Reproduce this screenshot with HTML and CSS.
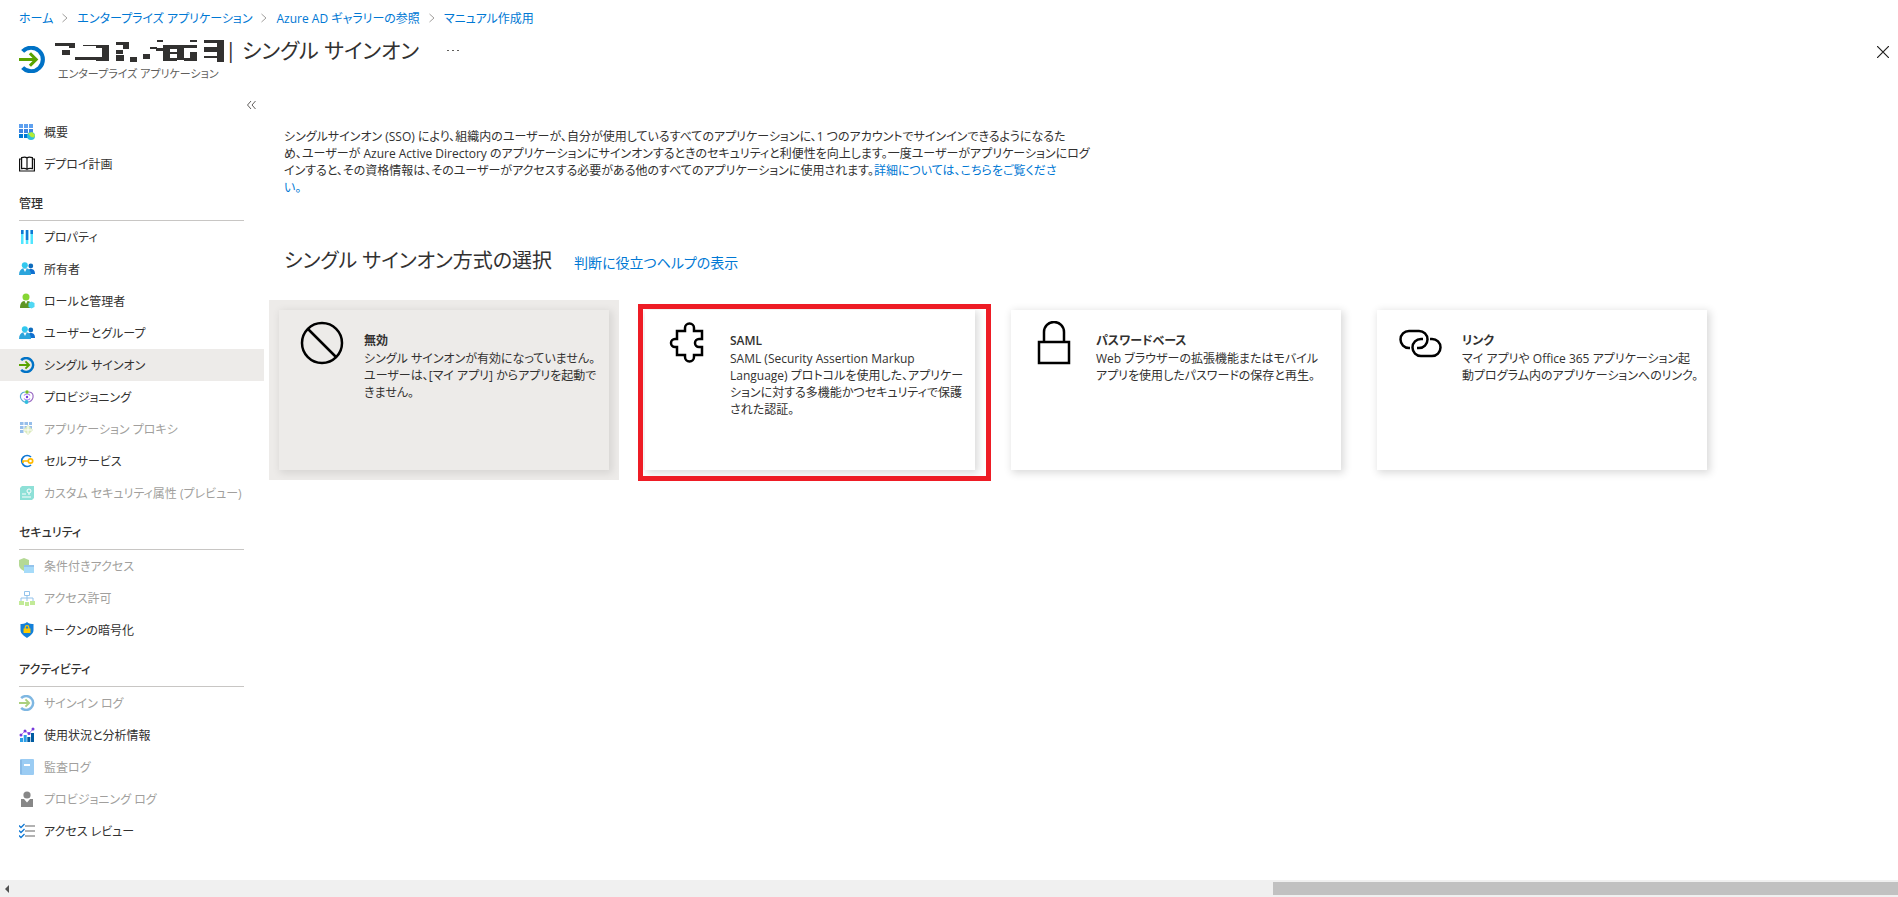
FILE: index.html
```html
<!DOCTYPE html>
<html lang="ja">
<head>
    <meta charset="UTF-8">
    <meta name="viewport" content="width=device-width, initial-scale=1.0">
    <title>シングル サインオン</title>
    <link rel="stylesheet" href="styles.css">
</head>
<body>
    <svg class="defs" aria-hidden="true">
        <symbol id="chevron" viewBox="0 0 8 10"><path d="M1.5 1l4.5 4-4.5 4" fill="none" stroke="#a19f9d"/></symbol>
        <symbol id="sso" viewBox="0 0 26 26">
            <path d="M3.500 5.200A11.300 11.300 0 1 1 3.500 20.800" fill="none" stroke="#0072c6" stroke-width="4"/>
            <path d="M0 13h16M10.500 7l6 6-6 6" fill="none" stroke="#59a300" stroke-width="3"/>
        </symbol>
        <symbol id="people" viewBox="0 0 16 16">
            <circle cx="11.800" cy="5" r="2.400" fill="#0f6cbd"/><path d="M8 13c0-4 2-5 4-5s4 1 4 5z" fill="#0f6fd0"/>
            <circle cx="5.800" cy="4.300" r="3" fill="#32c8ee"/><path d="M0 14c0-4 2-6 3.500-6.500h5C10 8 12 10 12 14z" fill="#2ba5dc"/><path d="M4.500 8h3L6 11z" fill="#fff"/>
        </symbol>
    </svg>

    <header class="page-header">
        <nav class="breadcrumb">
            <a href="#">ホーム</a>
            <svg class="chevron"><use href="#chevron"/></svg>
            <a href="#">エンタープライズ アプリケーション</a>
            <svg class="chevron"><use href="#chevron"/></svg>
            <a href="#">Azure AD ギャラリーの参照</a>
            <svg class="chevron"><use href="#chevron"/></svg>
            <a href="#">マニュアル作成用</a>
        </nav>
        <div class="title-bar">
            <svg class="title-icon"><use href="#sso"/></svg>
            <div class="title-text">
                <div class="title-row">
                    <svg class="masked-name" viewBox="0 0 170 22" fill="#323130">
                        <path d="M0 3h20v5h-6V6H0zM7 10h8v5H7zM20 17h27v3H20zM28 5h26v16H41v-4h6V8h-6V6H28z"/>
                        <path d="M61 2h13v7h-6V5h-7zM61 10h7v4h-7zM61 15h8v6h-8zM75 17h7v5h-7zM88 14h7v5h-7z"/>
                        <path d="M102 0h6v2h-6zM95 7h7v2h-7zM101 8h7V5h27v3h-6v12h-7v-6h-7v4h7v3h-14V11h-7zM115 9v3h7V9zM129 5h13v3h-13zM135 0h7v2h-7zM135 12h7v9h-13v-3h6z"/>
                        <path d="M149 0h20v22h-7v-4h-13v-2h13v-4h-13V7h13V3h-13z"/>
                    </svg>
                    <h1 class="page-title">| シングル サインオン</h1>
                    <button class="more-button" aria-label="その他">
                        <svg viewBox="0 0 12 2" width="12" height="2" fill="#605e5c"><path d="M0 0h2v1H0zM5 0h2v1H5zM10 0h2v1h-2z"/></svg>
                    </button>
                </div>
                <div class="page-subtitle">エンタープライズ アプリケーション</div>
            </div>
            <button class="close-button" aria-label="閉じる">
                <svg viewBox="0 0 12 12" width="12" height="12"><path d="M0 0l12 12M12 0L0 12" stroke="#201f1e" stroke-width="1.200"/></svg>
            </button>
        </div>
    </header>

    <div class="page-body">
        <aside class="sidebar">
            <button class="collapse-button" aria-label="メニューを折りたたむ">
                <svg viewBox="0 0 9 8" width="9" height="8"><path d="M4 0L.5 4 4 8M8.500 0L5 4l3.500 4" fill="none" stroke="#605e5c"/></svg>
            </button>
            <nav>
                <ul class="menu">
                    <li><a class="menu-item" href="#">
                        <svg class="menu-icon" viewBox="0 0 16 16"><path d="M0 0h4v4H0zM5 0h4v4H5zM10 0h4v4h-4z" fill="#5ea0ef"/><path d="M0 5h4v4H0zM5 5h4v4H5zM10 5h4v4h-4z" fill="#3f86e2"/><path d="M0 10h4v4H0zM5 10h4v4H5z" fill="#0078d4"/><circle cx="12" cy="12" r="4" fill="#32bedd"/><path d="M9 9.500l4-1.500 3 3-1 2.500-3-.5z" fill="#b4ec36"/></svg>
                        概要</a></li>
                    <li><a class="menu-item" href="#">
                        <svg class="menu-icon" viewBox="0 0 16 16" fill="none" stroke="#111" stroke-width="1.200"><path d="M2.600 1.600C5 .8 7 1 8 2c1-1 3-1.200 5.400-.4v11C11 12 9 12.400 8 13.400 7 12.400 5 12 2.600 12.600zM8 2v11M2.600 3H.6v12h14.800V3h-2"/></svg>
                        デプロイ計画</a></li>
                </ul>
                <h2 class="menu-heading">管理</h2>
                <ul class="menu">
                    <li><a class="menu-item" href="#">
                        <svg class="menu-icon" viewBox="0 0 16 16"><path d="M2 1h2.500v14H2zM6.800 1h2.500v14H6.800zM11.500 1H14v14h-2.500z" fill="#50e6ff"/><path d="M2 1h2.500v4H2zM6.800 1h2.500v10H6.800zM11.500 1H14v4h-2.500z" fill="#0f78d4"/></svg>
                        プロパティ</a></li>
                    <li><a class="menu-item" href="#"><svg class="menu-icon"><use href="#people"/></svg>所有者</a></li>
                    <li><a class="menu-item" href="#">
                        <svg class="menu-icon" viewBox="0 0 16 16"><circle cx="7" cy="4" r="3.500" fill="#86d633"/><path d="M1 15c0-5 2-6.500 4-7h4c2 .5 4 2 4 7z" fill="#5e9624"/><path d="M5.500 8h3L7 11z" fill="#fff"/><path d="M12.500 8.500l3 1.500v4l-3 1.500-3-1.500v-4z" fill="#50d8f4"/></svg>
                        ロールと管理者</a></li>
                    <li><a class="menu-item" href="#"><svg class="menu-icon"><use href="#people"/></svg>ユーザーとグループ</a></li>
                    <li><a class="menu-item selected" href="#"><svg class="menu-icon"><use href="#sso"/></svg>シングル サインオン</a></li>
                    <li><a class="menu-item" href="#">
                        <svg class="menu-icon" viewBox="0 0 16 16" fill="none" stroke-width="1.200"><path d="M6 3C2.500 3 1 6 1.500 8.500S5 13 6 13" stroke="#5aa9d6"/><path d="M10 3c3.500 0 4.500 3 4 5.500S11 13 9 13" stroke="#9b6cc4"/><path d="M5 6.500c1.500-2 5-2 6 0M5 9.500c1.500 2 5 2 6 0" stroke="#a67af4"/><circle cx="8" cy="3" r="1.800" fill="#76bc2d"/><circle cx="8" cy="8" r="1.200" fill="#773adc"/><circle cx="7.500" cy="13" r="2" fill="#32bedd"/></svg>
                        プロビジョニング</a></li>
                    <li><a class="menu-item disabled" href="#">
                        <svg class="menu-icon" viewBox="0 0 16 16"><path d="M1 1h3.500v3H1zM5.500 1H9v3H5.500zM10 1h3v3h-3zM1 5h3.500v3H1zM5.500 5H9v3H5.500zM10 5h3v3h-3zM1 9h3.500v3H1z" fill="#2f7fd6"/><path d="M9 4l5 5-5 5-5-5z" fill="#b8d77c"/><path d="M9 5v8M5 9h8" stroke="#fff"/></svg>
                        アプリケーション プロキシ</a></li>
                    <li><a class="menu-item" href="#">
                        <svg class="menu-icon" viewBox="0 0 16 16" fill="none"><path d="M12 4A5.500 5.500 0 1 0 12 12" stroke="#0f78d4" stroke-width="1.700"/><circle cx="11.500" cy="8" r="2.200" stroke="#ffb900" stroke-width="1.700"/><path d="M9 8H4v2" stroke="#ffb900" stroke-width="1.700"/></svg>
                        セルフサービス</a></li>
                    <li><a class="menu-item disabled" href="#">
                        <svg class="menu-icon" viewBox="0 0 16 16"><path d="M3 1h12v12l-2 2H1V3z" fill="#1fc2b0"/><circle cx="10" cy="6" r="2" fill="none" stroke="#fff"/><path d="M3 9h4M3 12h9M10 8v2" stroke="#fff"/></svg>
                        カスタム セキュリティ属性 (プレビュー)</a></li>
                </ul>
                <h2 class="menu-heading">セキュリティ</h2>
                <ul class="menu">
                    <li><a class="menu-item disabled" href="#">
                        <svg class="menu-icon" viewBox="0 0 16 16"><path d="M0 2l5-2 5 2v5c0 3-3 5-5 6-2-1-5-3-5-6z" fill="#6bb52e"/><path d="M5 7h10v8H5z" fill="#50b8f4"/><path d="M5 7h10v2H5z" fill="#2b88d8"/></svg>
                        条件付きアクセス</a></li>
                    <li><a class="menu-item disabled" href="#">
                        <svg class="menu-icon" viewBox="0 0 16 16"><path d="M5.500 1.500h5v4h-5zM8 5v6M2 11V8h12v3" fill="none" stroke="#2b88d8"/><path d="M0 11h5v4H0zM6 12h4v4H6zM11 11h5v4h-5z" fill="#86d633"/></svg>
                        アクセス許可</a></li>
                    <li><a class="menu-item" href="#">
                        <svg class="menu-icon" viewBox="0 0 16 16"><path d="M8 0c2 2 5 2 6.500 2v6c0 4-4 6-6.500 8-2.500-2-6.500-4-6.500-8V2C3 2 6 2 8 0z" fill="#1380da"/><path d="M6.200 7V5.500a1.800 1.800 0 0 1 3.600 0V7" fill="none" stroke="#ffca00" stroke-width="1.200"/><path d="M4.500 6.500h7V11h-7z" fill="#ffca00"/></svg>
                        トークンの暗号化</a></li>
                </ul>
                <h2 class="menu-heading">アクティビティ</h2>
                <ul class="menu">
                    <li><a class="menu-item disabled" href="#"><svg class="menu-icon"><use href="#sso"/></svg>サインイン ログ</a></li>
                    <li><a class="menu-item" href="#">
                        <svg class="menu-icon" viewBox="0 0 16 16"><path d="M1 11h3v4H1zM4.700 8h3v7h-3z" fill="#2b9fe8"/><path d="M8.300 10h3v5h-3zM12 6h3v9h-3z" fill="#005ba1"/><path d="M2 8l4-4 4 2.500L14 2" fill="none" stroke="#b77af4"/><g fill="#773adc"><circle cx="2" cy="8" r="1.500"/><circle cx="6" cy="4" r="1.500"/><circle cx="10" cy="6.500" r="1.500"/><circle cx="14" cy="2" r="1.500"/></g></svg>
                        使用状況と分析情報</a></li>
                    <li><a class="menu-item disabled" href="#">
                        <svg class="menu-icon" viewBox="0 0 16 16"><rect x="1" width="14" height="16" rx="1" fill="#3a9be8"/><path d="M1 1h2v14H1z" fill="#1679d0"/><path d="M5 5h6v2H5z" fill="#fff"/></svg>
                        監査ログ</a></li>
                    <li><a class="menu-item disabled" href="#">
                        <svg class="menu-icon dark" viewBox="0 0 16 16"><circle cx="8" cy="4" r="3.600"/><path d="M2 8h3l3 3.500L11 8h3v8H2z"/></svg>
                        プロビジョニング ログ</a></li>
                    <li><a class="menu-item" href="#">
                        <svg class="menu-icon" viewBox="0 0 16 16" fill="none"><path d="M6 3h10M6 8h10M6 13h10" stroke="#999" stroke-width="1.700"/><path d="M0 2.500l2 2L5.500 1M0 7.500l2 2L5.500 6M0 12.500l2 2L5.500 11" stroke="#0f78d4" stroke-width="1.300"/></svg>
                        アクセス レビュー</a></li>
                </ul>
            </nav>
        </aside>

        <main class="content">
            <p class="intro">
                シングルサインオン (SSO) により、組織内のユーザーが、自分が使用しているすべてのアプリケーションに、1 つのアカウントでサインインできるようになるた<br>
                め、ユーザーが Azure Active Directory のアプリケーションにサインオンするときのセキュリティと利便性を向上します。一度ユーザーがアプリケーションにログ<br>
                インすると、その資格情報は、そのユーザーがアクセスする必要がある他のすべてのアプリケーションに使用されます。<a href="#">詳細については、こちらをご覧くださ<br>い。</a>
            </p>
            <div class="method-header">
                <h2 class="method-title">シングル サインオン方式の選択</h2>
                <a href="#">判断に役立つヘルプの表示</a>
            </div>
            <div class="cards">
                <div class="card-slot current">
                    <button class="card">
                        <svg class="card-icon" viewBox="0 0 44 44"><circle cx="22" cy="22" r="20"/><path d="M8 8l28 28"/></svg>
                        <span class="card-text">
                            <span class="card-title">無効</span>
                            <span class="card-desc">シングル サインオンが有効になっていません。<br>ユーザーは、[マイ アプリ] からアプリを起動で<br>きません。</span>
                        </span>
                    </button>
                </div>
                <div class="card-slot marked">
                    <button class="card">
                        <svg class="card-icon" viewBox="0 0 44 44"><path d="M11 10h8V7a4.500 4.500 0 0 1 9 0v3h8v8h-3a4 4 0 0 0 0 8h3v8h-8v2a4.500 4.500 0 0 1-9 0v-2h-8v-8H9a4 4 0 0 1 0-8h2z"/></svg>
                        <span class="card-text">
                            <span class="card-title">SAML</span>
                            <span class="card-desc">SAML (Security Assertion Markup<br>Language) プロトコルを使用した、アプリケー<br>ションに対する多機能かつセキュリティで保護<br>された認証。</span>
                        </span>
                    </button>
                </div>
                <div class="card-slot">
                    <button class="card">
                        <svg class="card-icon" viewBox="0 0 44 44"><path d="M7 21h30v21H7zM12 21V11a10 10 0 0 1 20 0v10"/></svg>
                        <span class="card-text">
                            <span class="card-title">パスワードベース</span>
                            <span class="card-desc">Web ブラウザーの拡張機能またはモバイル<br>アプリを使用したパスワードの保存と再生。</span>
                        </span>
                    </button>
                </div>
                <div class="card-slot">
                    <button class="card">
                        <svg class="card-icon" viewBox="0 0 44 44"><path d="M12 27h-1a8 8 0 0 1 0-17h10a8 8 0 0 1 0 17h-2M25 18h-2a8 8 0 0 0 0 17h11a8 8 0 0 0 0-17h-2"/></svg>
                        <span class="card-text">
                            <span class="card-title">リンク</span>
                            <span class="card-desc">マイ アプリや Office 365 アプリケーション起<br>動プログラム内のアプリケーションへのリンク。</span>
                        </span>
                    </button>
                </div>
            </div>
        </main>
    </div>

    <div class="scrollbar">
        <button class="scroll-arrow" aria-label="左へスクロール"></button>
        <div class="scroll-thumb"></div>
    </div>
</body>
</html>
```
FILE: styles.css
```css
* {
    margin: 0;
    padding: 0;
    box-sizing: border-box;
}

body {
    display: flex;
    flex-direction: column;
    min-height: 100vh;
    background-color: #ffffff;
    color: #323130;
    font-family: "Open Sans", "Noto Sans CJK JP", sans-serif;
    font-feature-settings: "palt";
    font-size: 12px;
    line-height: 17px;
}

a {
    color: #0078d4;
    text-decoration: none;
}

button {
    border: none;
    background: none;
    color: inherit;
    font: inherit;
    font-feature-settings: inherit;
    cursor: pointer;
}

.defs {
    display: none;
}

.breadcrumb {
    display: flex;
    align-items: center;
    gap: 8px;
    height: 36px;
    padding-left: 19px;
}

.chevron {
    width: 8px;
    height: 10px;
}

.title-bar {
    display: flex;
    height: 60px;
    padding: 0 9px 0 19px;
}

.title-icon {
    flex: none;
    width: 27px;
    height: 27px;
    margin-top: 10px;
}

.title-text {
    flex: 1;
    margin-left: 9px;
}

.title-row {
    display: flex;
    align-items: center;
    height: 29px;
}

.masked-name {
    width: 170px;
    height: 22px;
}

.page-title {
    font-size: 21px;
    font-weight: 400;
    line-height: 29px;
}

.more-button {
    margin-left: 28px;
}

.page-subtitle {
    padding-left: 3px;
    color: #605e5c;
    font-size: 11px;
}

.close-button {
    align-self: flex-start;
    width: 12px;
    height: 12px;
    margin-top: 10px;
}

.close-button svg,
.collapse-button svg,
.more-button svg {
    display: block;
}

.page-body {
    display: flex;
    flex: 1;
}

.sidebar {
    flex: none;
    width: 264px;
}

.collapse-button {
    display: block;
    height: 20px;
    margin-left: auto;
    padding: 5px 8px 7px;
}

.menu {
    list-style: none;
}

.menu-item {
    display: flex;
    align-items: center;
    gap: 9px;
    height: 32px;
    padding-left: 19px;
    color: #323130;
    white-space: nowrap;
}

.menu-item.selected {
    background-color: #edebe9;
}

.menu-item.disabled {
    color: #a19f9d;
}

.menu-icon {
    flex: none;
    width: 16px;
    height: 16px;
}

.disabled .menu-icon {
    opacity: 0.5;
}

.menu-icon.dark {
    fill: #111111;
}

.menu-heading {
    height: 41px;
    margin: 0 20px 0 19px;
    padding-top: 15px;
    border-bottom: 1px solid #c8c6c4;
    font-size: 12px;
    font-weight: 500;
}

.content {
    flex: 1;
    padding-left: 5px;
}

.intro {
    padding: 32px 0 0 15px;
    white-space: nowrap;
}

.method-header {
    display: flex;
    align-items: baseline;
    gap: 22px;
    margin-top: 49px;
    padding-left: 15px;
    font-size: 14px;
}

.method-title {
    font-size: 20px;
    font-weight: 400;
    line-height: 32px;
}

.cards {
    display: flex;
    gap: 16px;
    margin-top: 23px;
}

.card-slot {
    position: relative;
    width: 350px;
    padding: 10px;
}

.card-slot.current {
    background-color: #edebe9;
}

/* highlight frame drawn over the recommended method */
.card-slot.marked::after {
    content: "";
    position: absolute;
    top: 4px;
    right: -6px;
    bottom: -1px;
    left: 3px;
    border: 5px solid #ee1c25;
    pointer-events: none;
}

.card {
    display: flex;
    align-items: flex-start;
    gap: 20px;
    width: 100%;
    min-height: 160px;
    padding: 11px 0 0 21px;
    background-color: #ffffff;
    box-shadow: 2px 2px 8px 1px rgba(0, 0, 0, 0.15);
    text-align: left;
    white-space: nowrap;
}

.current .card {
    background-color: #edebe9;
    box-shadow: 2px 2px 8px 1px rgba(0, 0, 0, 0.1);
}

.card-icon {
    flex: none;
    width: 44px;
    height: 44px;
    fill: none;
    stroke: #000000;
    stroke-width: 2.5;
}

.card-text {
    padding-top: 11px;
}

.card-title,
.card-desc {
    display: block;
}

.card-title {
    margin-bottom: 1px;
    font-weight: 600;
}

.scrollbar {
    display: flex;
    align-items: center;
    justify-content: space-between;
    height: 17px;
    padding-left: 5px;
    background-color: #f0f0f0;
}

.scroll-arrow {
    border-top: 4px solid transparent;
    border-right: 4px solid #505050;
    border-bottom: 4px solid transparent;
}

.scroll-thumb {
    width: 33%;
    height: 13px;
    background-color: #c1c1c1;
}
```
